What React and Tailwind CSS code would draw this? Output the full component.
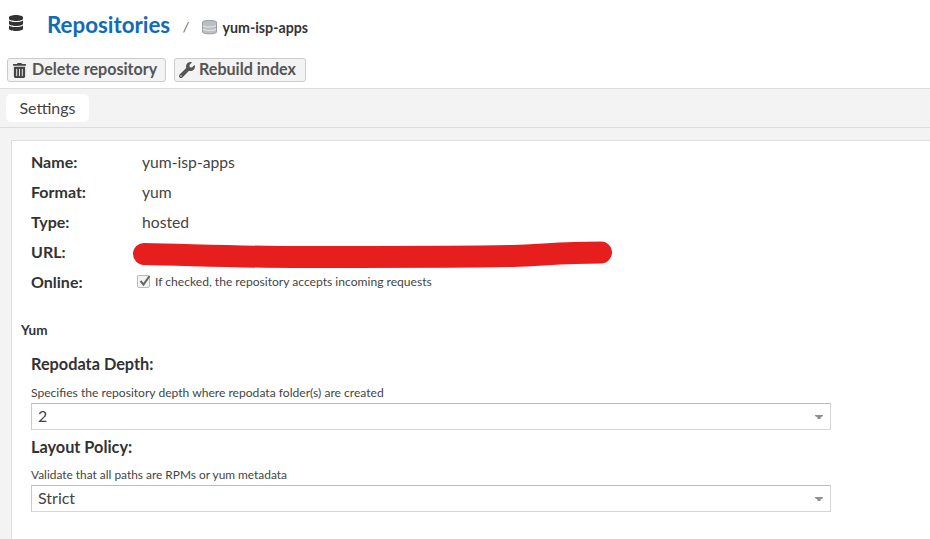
import React from "react";
import { FaDatabase, FaTrashAlt, FaWrench } from "react-icons/fa";

function Row({ label, children }) {
  return (
    <div className="flex h-[30px] items-center">
      <div className="-mt-[1px] w-[111px] shrink-0 text-[16px] font-bold text-[#333333]">{label}</div>
      {children}
    </div>
  );
}

function Arrow() {
  return (
    <svg width="8" height="4" viewBox="0 0 8 4" className="shrink-0">
      <path d="M0 0H8V1L5.5 2.5V4H2.5V2.5L0 1Z" fill="#8f8f8f" />
    </svg>
  );
}

function Select({ value }) {
  return (
    <div className="flex h-[27px] w-[800px] items-center justify-between border border-[#d6d6d6] border-t-[#bdbdbd] border-l-[#cccccc] bg-white pl-[6px] pr-[7px] text-[16px] text-[#444444]">
      <span className="-mt-[1px]">{value}</span>
      <Arrow />
    </div>
  );
}

function Btn({ icon, children, w, gap }) {
  return (
    <div className={`flex h-6 items-center rounded-[3px] border border-[#cccccc] bg-[#f3f3f3] pl-[4px] text-[16.1px] font-bold text-[#555555] ${w} ${gap}`}>
      {icon}
      <span className="-mt-[1px]">{children}</span>
    </div>
  );
}

export default function App() {
  return (
    <div className="h-[539px] w-[930px] overflow-hidden bg-white font-['Lato',sans-serif] text-[#333333]">
      <div className="h-[89px] border-b border-[#dddddd] bg-white">
        <div className="flex h-[58px] items-center">
          <FaDatabase className="ml-[8px] -mt-[13px] text-[16px] text-[#333333]" />
          <span className="ml-[23px] -mt-[8px] text-[22.3px] font-bold text-[#0e6cb8]">Repositories</span>
          <span className="ml-[13px] -mt-[3px] text-[13px] italic text-[#555555]">/</span>
          <svg width="15" height="16" viewBox="0 0 15 16" className="ml-[13px] -mt-[4px]">
            <path d="M0.5 3C0.5 1 14.5 1 14.5 3V13C14.5 15.5 0.5 15.5 0.5 13Z" fill="#b9bfc4" stroke="#9aa0a5" />
            <path d="M1 6.5C3 8.5 12 8.5 14 6.5M1 10C3 12 12 12 14 10" fill="none" stroke="#eeeeee" />
          </svg>
          <span className="ml-[6px] -mt-[3px] text-[14.2px] font-bold text-[#333333]">yum-isp-apps</span>
        </div>
        <div className="ml-[7px] flex gap-2">
          <Btn w="w-[159px]" gap="gap-[5px]" icon={<FaTrashAlt className="text-[15px] text-[#444444]" />}>Delete repository</Btn>
          <Btn w="w-[132px]" gap="gap-[4px]" icon={<FaWrench className="text-[16px] text-[#555555]" />}>Rebuild index</Btn>
        </div>
      </div>
      <div className="h-[39px] border-b border-[#dddddd] bg-[#f3f3f3] pl-[6px] pt-[5px]">
        <div className="flex h-[28px] w-[83px] items-center justify-center rounded-[5px] bg-white text-[16px] text-[#444444]">Settings</div>
      </div>
      <div className="h-[411px] bg-[#f3f3f3] pl-[11px] pt-[12px]">
        <div className="h-full border-l border-t border-[#dddddd] bg-white pl-[19px] pt-[6px]">
          <Row label="Name:"><span className="mt-[1px] text-[15.7px] text-[#444444]">yum-isp-apps</span></Row>
          <Row label="Format:"><span className="mt-[1px] text-[15.7px] text-[#444444]">yum</span></Row>
          <Row label="Type:"><span className="mt-[1px] text-[15.7px] text-[#444444]">hosted</span></Row>
          <Row label="URL:">
            <svg width="480" height="30" viewBox="0 0 480 30" className="-ml-[9px] shrink-0 overflow-visible">
              <path d="M11 17C60 18 110 20 160 20C260 20 340 20 380 19C410 18 430 15.5 468 15.5" fill="none" stroke="#e61e1e" strokeWidth="22" strokeLinecap="round" />
            </svg>
          </Row>
          <Row label="Online:">
            <div className="-ml-[5px] flex items-center gap-[5px]">
              <div className="relative h-[13px] w-[13px] rounded-[2px] border border-[#bbbbbb] bg-[#f3f3f3]">
                <svg width="14" height="14" viewBox="0 0 14 14" className="absolute -top-[2px] left-0">
                  <path d="M2.5 7L5.5 10.5L11.5 2" fill="none" stroke="#666666" strokeWidth="2" />
                </svg>
              </div>
              <span className="text-[12.1px] text-[#444444]">If checked, the repository accepts incoming requests</span>
            </div>
          </Row>
          <div className="-ml-[10px] mt-[23px] text-[13.5px] font-bold leading-[20px] text-[#333333]">Yum</div>
          <div className="mt-[12px] text-[16.3px] font-bold leading-[24px] text-[#333333]">Repodata Depth:</div>
          <div className="mt-[10px] mb-[3px] text-[12.1px] leading-[14px] text-[#444444]">Specifies the repository depth where repodata folder(s) are created</div>
          <Select value="2" />
          <div className="mt-[5px] text-[16.3px] font-bold leading-[24px] text-[#333333]">Layout Policy:</div>
          <div className="mt-[9px] mb-[3px] text-[11.9px] leading-[14px] text-[#444444]">Validate that all paths are RPMs or yum metadata</div>
          <Select value="Strict" />
        </div>
      </div>
    </div>
  );
}
